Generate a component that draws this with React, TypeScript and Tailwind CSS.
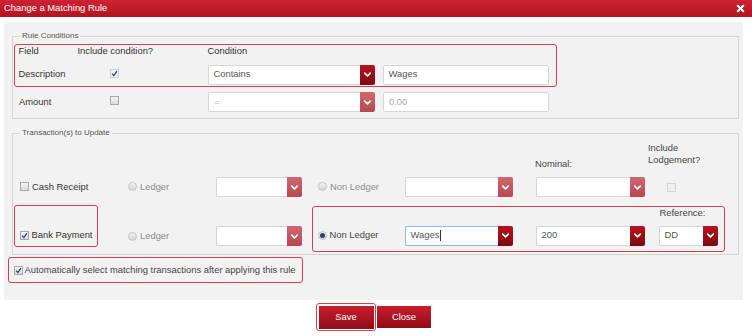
import React from 'react';
import { ChevronDown, X } from 'lucide-react';

type Tone = 'dark' | 'faded';

const Check: React.FC<{ checked?: boolean; faint?: boolean }> = ({ checked, faint }) => (
  <span
    className={`inline-flex h-[9px] w-[9px] shrink-0 items-center justify-center border ${
      faint ? 'border-[#d2d2d2] bg-[#efefef]' : 'border-[#a9a9a9] bg-gradient-to-b from-[#f6f6f6] to-[#d9d9d9]'
    }`}
  >
    {checked && (
      <svg width="7" height="7" viewBox="0 0 7 7">
        <path d="M1 3.6 L2.9 5.4 L6 1.2" fill="none" stroke="#284a82" strokeWidth="1.3" />
      </svg>
    )}
  </span>
);

const Radio: React.FC<{ on?: boolean; label: string; muted?: boolean }> = ({ on, label, muted }) => (
  <span className="flex items-center gap-[3px]">
    <span className="inline-flex h-[9px] w-[9px] items-center justify-center rounded-full border border-[#c4c4c4] bg-gradient-to-b from-[#f2f2f2] to-[#d6d6d6]">
      {on && <span className="h-[5px] w-[5px] rounded-full bg-[#23457a]" />}
    </span>
    <span className={muted ? 'text-[#8c8c8c]' : 'text-[#444]'}>{label}</span>
  </span>
);

const Select: React.FC<{
  w: string;
  value?: string;
  tone?: Tone;
  dim?: boolean;
  focus?: boolean;
  className?: string;
}> = ({ w, value, tone = 'dark', dim, focus, className = '' }) => (
  <div className={`flex h-[20px] shrink-0 ${w} ${className}`}>
    <div
      className={`flex flex-1 items-center rounded-l-[2px] border border-r-0 bg-white pl-[5px] ${
        focus ? 'border-[#8dbbd8]' : 'border-[#d6d6d6]'
      } ${dim ? 'text-[#b9b9b9]' : 'text-[#555]'}`}
    >
      {value}
      {focus && <span className="ml-[1px] h-[11px] w-px bg-[#333]" />}
    </div>
    <div
      className={`flex w-[15px] items-center justify-center rounded-r-[2px] ${
        tone === 'dark'
          ? 'bg-gradient-to-b from-[#b8141f] to-[#7c0a12]'
          : 'bg-gradient-to-b from-[#cf6870] to-[#b7464f]'
      }`}
    >
      <ChevronDown size={11} strokeWidth={3.5} className="text-white" />
    </div>
  </div>
);

const Input: React.FC<{ w: string; value: string; dim?: boolean }> = ({ w, value, dim }) => (
  <div
    className={`flex h-[20px] shrink-0 items-center rounded-[2px] border border-[#d6d6d6] bg-white pl-[5px] ${w} ${
      dim ? 'text-[#aaa]' : 'text-[#555]'
    }`}
  >
    {value}
  </div>
);

const App: React.FC = () => {
  return (
    <div className="h-[336px] w-[752px] overflow-hidden bg-white font-['Liberation_Sans',Arial,sans-serif] text-[9.4px] text-[#333]">
      {/* Title bar */}
      <div className="flex h-[17px] items-center justify-between bg-gradient-to-b from-[#cd2333] to-[#b3121f] pl-[4px] pr-[6px] text-white">
        <span>Change a Matching Rule</span>
        <X size={11} strokeWidth={4.5} />
      </div>

      {/* Body */}
      <div className="ml-[4px] mt-[5px] h-[278px] w-[739px] bg-[#f2f2f2] pt-[9px]">
        {/* Rule Conditions */}
        <fieldset className="ml-[8px] w-[727px] border border-[#d6d6d6] pb-[6px]">
          <legend className="ml-[7px] px-[2px] text-[8px] leading-[10px] text-[#555]">Rule Conditions</legend>

          <div className="ml-[1px] mt-[3px] w-[543px] rounded-[3px] border-[1.5px] border-[#d6404d] pb-[1.5px] pl-[3.5px]">
            <div className="flex h-[13px] items-center">
              <span className="w-[59px]">Field</span>
              <span className="w-[130px]">Include condition?</span>
              <span>Condition</span>
            </div>
            <div className="mt-[6.5px] flex h-[20px] items-center">
              <span className="w-[59px]">Description</span>
              <span className="w-[130px] pl-[32px]">
                <Check checked faint />
              </span>
              <Select w="w-[167px]" value="Contains" />
              <Input w="w-[166px] ml-[8px]" value="Wages" />
            </div>
          </div>

          <div className="mt-[5px] flex h-[20px] items-center pl-[6px]">
            <span className="w-[59px]">Amount</span>
            <span className="w-[130px] pl-[32px]">
              <Check />
            </span>
            <Select w="w-[167px]" value="=" tone="faded" dim />
            <Input w="w-[166px] ml-[8px]" value="0.00" dim />
          </div>
        </fieldset>

        {/* Transactions to Update */}
        <fieldset className="ml-[8px] mt-[9px] w-[727px] border border-[#d6d6d6] pb-[2px]">
          <legend className="ml-[7px] px-[2px] text-[8px] leading-[10px] text-[#555]">Transaction(s) to Update</legend>

          <div className="flex items-start pt-[4px] text-[#444]">
            <span className="w-[522px]" />
            <span className="mt-[16px] w-[113px] leading-[12px]">Nominal:</span>
            <span className="leading-[12px]">
              Include
              <br />
              Lodgement?
            </span>
          </div>

          <div className="mt-[7px] flex h-[20px] items-center pl-[7px]">
            <span className="flex w-[108px] items-center gap-[3px]">
              <Check />
              <span>Cash Receipt</span>
            </span>
            <span className="w-[88px]">
              <Radio label="Ledger" muted />
            </span>
            <Select w="w-[86px]" tone="faded" />
            <span className="w-[16px]" />
            <span className="w-[87px]">
              <Radio label="Non Ledger" muted />
            </span>
            <Select w="w-[108px]" tone="faded" />
            <span className="w-[23px]" />
            <Select w="w-[109px]" tone="faded" />
            <span className="w-[22px]" />
            <Check faint />
          </div>

          <div className="mt-[8px] flex items-start">
            <div className="ml-[1px] flex h-[42px] w-[84px] items-end gap-[3px] rounded-[3px] border-[1.5px] border-[#d6404d] pb-[4.5px] pl-[4.5px]">
              <span className="flex h-[12px] items-center gap-[3px]">
                <Check checked />
                <span>Bank Payment</span>
              </span>
            </div>
            <span className="ml-[30px] mt-[25px] flex h-[12px] w-[88px] items-center">
              <Radio label="Ledger" muted />
            </span>
            <Select w="w-[86px]" tone="faded" className="mt-[21px]" />

            <div className="ml-[10px] mt-[1px] h-[46px] w-[413px] rounded-[3px] border-[1.5px] border-[#d6404d] pl-[4.5px]">
              <div className="h-[11px] pl-[342px] leading-[11px] text-[#444]">Reference:</div>
              <div className="mt-[7.5px] flex h-[20px] items-center">
                <span className="w-[87px]">
                  <Radio label="Non Ledger" on />
                </span>
                <Select w="w-[108px]" value="Wages" focus />
                <span className="w-[23px]" />
                <Select w="w-[109px]" value="200" />
                <span className="w-[14px]" />
                <Select w="w-[59px]" value="DD" />
              </div>
            </div>
          </div>
        </fieldset>

        {/* Auto-select */}
        <div className="ml-[4px] mt-[2px] flex h-[26px] w-[295px] items-center gap-[2px] rounded-[3px] border-[1.5px] border-[#d6404d] pl-[4.5px]">
          <Check checked />
          <span className="text-[#444]">Automatically select matching transactions after applying this rule</span>
        </div>
      </div>

      {/* Buttons */}
      <div className="mt-[3px] flex items-center pl-[316px]">
        <div className="rounded-[3px] border-[1.5px] border-[#d6404d] p-[1.5px]">
          <button className="flex h-[23px] w-[55px] items-center justify-center bg-gradient-to-b from-[#c91d2c] to-[#8f0c16] text-white">
            Save
          </button>
        </div>
        <button className="ml-[1px] flex h-[22px] w-[54px] items-center justify-center bg-gradient-to-b from-[#c91d2c] to-[#8f0c16] text-white">
          Close
        </button>
      </div>
    </div>
  );
};

export default App;
